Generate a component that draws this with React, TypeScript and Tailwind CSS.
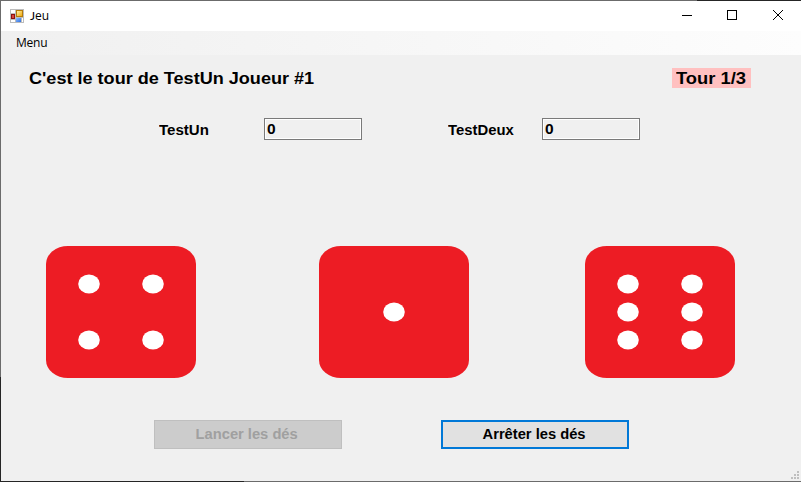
import React from "react";

const PIPS: Record<number, [number, number][]> = {
  1: [[75, 66]],
  4: [[43, 38], [107, 38], [43, 94], [107, 94]],
  6: [[43, 38], [107, 38], [43, 66], [107, 66], [43, 94], [107, 94]],
};

function Die({ value, className }: { value: number; className: string }) {
  return (
    <svg className={`h-[132px] w-[150px] shrink-0 ${className}`} viewBox="0 0 150 132">
      <rect width="150" height="132" rx="22" ry="18" fill="#ed1c24" />
      {PIPS[value].map(([x, y]) => (
        <ellipse key={`${x}-${y}`} cx={x} cy={y} rx="10.8" ry="9.4" fill="#fff" />
      ))}
    </svg>
  );
}

function FormIcon() {
  return (
    <svg className="ml-[9px] h-[14px] w-[14px] shrink-0" viewBox="0 0 14 14" shapeRendering="crispEdges">
      <defs>
        <linearGradient id="gold" x1="0" y1="0" x2="1" y2="1">
          <stop offset="0" stopColor="#fff0a0" />
          <stop offset="1" stopColor="#efa911" />
        </linearGradient>
        <linearGradient id="blue" x1="0" y1="0" x2="1" y2="1">
          <stop offset="0" stopColor="#8dbcff" />
          <stop offset="1" stopColor="#2c6ee0" />
        </linearGradient>
      </defs>
      <rect width="14" height="14" fill="#bcbcbc" />
      <path d="M1 1h4v3H1zM1 11h4v2H1zM12 9h1v4h-1z" fill="#fff" />
      <rect x="1" y="5" width="4" height="5" fill="#8d1010" />
      <rect x="2" y="6" width="2" height="3" fill="#d8453c" />
      <rect x="6" y="1" width="7" height="7" fill="#b67b08" />
      <rect x="7" y="2" width="5" height="5" fill="url(#gold)" />
      <rect x="6" y="9" width="5" height="4" fill="url(#blue)" />
    </svg>
  );
}

function Score({ value }: { value: string }) {
  return (
    <div className="h-[22px] w-[98px] shrink-0 border border-[#7a7a7a]">
      <div className="h-full border border-white pl-px text-[14.5px] leading-[19px]">
        <span className="inline-block origin-left scale-x-[1.07]">{value}</span>
      </div>
    </div>
  );
}

export default function App() {
  return (
    <div className="flex h-[482px] w-[801px] overflow-hidden bg-[#f0f0f0] text-black">
      <div className="flex w-px shrink-0 flex-col">
        <div className="h-[377px] bg-[#6b6b6b]" />
        <div className="grow bg-[#252525]" />
      </div>
      <div className="flex min-w-0 grow flex-col">
        <div className="flex h-px shrink-0">
          <div className="w-[696px] bg-[#6b6b6b]" />
          <div className="grow bg-[#252525]" />
        </div>
        <header className="flex h-[30px] shrink-0 items-center bg-white font-['Open_Sans',sans-serif] text-[12px]">
          <FormIcon />
          <span className="ml-[6px] leading-[16px]">
            <span className="font-['Lato',sans-serif]">J</span>eu
          </span>
          <svg className="ml-auto h-[30px] w-[138px]" viewBox="0 0 138 30" fill="none" stroke="#000">
            <path d="M19 14.5h10M64.5 9.5h9v9h-9z" shapeRendering="crispEdges" />
            <path d="M110 9l10 10M120 9l-10 10" />
          </svg>
        </header>
        <nav className="flex h-[24px] shrink-0 items-center bg-linear-to-r from-[#f0f0f0] to-[#fdfdfd] pl-[15px] font-['Open_Sans',sans-serif] text-[12px]">
          <span className="tracking-[-0.25px]">Menu</span>
        </nav>
        <main className="flex grow flex-col font-['Liberation_Sans',Arial,sans-serif] font-bold">
          <div className="mt-[13px] flex h-[20px] whitespace-nowrap text-[17px] leading-[21px]">
            <span className="ml-[28px] origin-left scale-x-[1.063]">C'est le tour de TestUn Joueur #1</span>
            <span className="mr-[50px] ml-auto h-[20px] w-[79px] bg-[#ffc0c0] pl-[4px]">
              <span className="inline-block origin-left scale-x-[1.08]">Tour 1/3</span>
            </span>
          </div>
          <div className="mt-[30px] flex h-[22px] whitespace-nowrap text-[14px] leading-[24px]">
            <span className="ml-[158px] w-[105px] origin-left scale-x-[1.075]">TestUn</span>
            <Score value="0" />
            <span className="ml-[86px] w-[94px] origin-left scale-x-[1.06]">TestDeux</span>
            <Score value="0" />
          </div>
          <div className="mt-[106px] flex">
            <Die value={4} className="ml-[45px]" />
            <Die value={1} className="ml-[123px]" />
            <Die value={6} className="ml-[116px]" />
          </div>
          <div className="mt-[42px] flex text-[14px]">
            <button disabled className="ml-[153px] h-[29px] w-[188px] border border-[#bfbfbf] bg-[#cccccc] pr-[2px] text-[#a0a0a0]">
              <span className="inline-block scale-x-[1.05]">Lancer les dés</span>
            </button>
            <button className="ml-[99px] h-[29px] w-[188px] border-2 border-[#0078d7] bg-[#e1e1e1] pr-[2px]">
              <span className="inline-block scale-x-[1.05]">Arrêter les dés</span>
            </button>
          </div>
          <svg className="mt-auto mr-[2px] mb-[2px] ml-auto h-[8px] w-[8px]" viewBox="0 0 8 8" fill="#bfbfbf">
            <path d="M6 0h2v2H6zM3 3h2v2H3zM6 3h2v2H6zM0 6h2v2H0zM3 6h2v2H3zM6 6h2v2H6z" />
          </svg>
        </main>
        <div className="flex h-px shrink-0">
          <div className="w-[243px] bg-[#252525]" />
          <div className="grow bg-[#6b6b6b]" />
        </div>
      </div>
    </div>
  );
}
